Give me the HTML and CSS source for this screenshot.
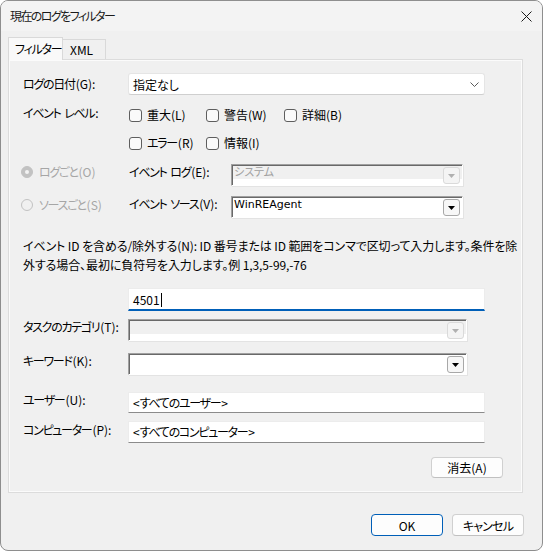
FILE: index.html
```html
<!DOCTYPE html>
<html lang="ja">
<head>
<meta charset="utf-8">
<title>現在のログをフィルター</title>
<link rel="stylesheet" href="styles.css">
</head>
<body>
<div class="window">
  <div class="titlebar">
    <span class="title">現在のログをフィルター</span>
    <svg class="close" width="11" height="11" viewBox="0 0 11 11"><path d="M0.5 0.5 L10.5 10.5 M10.5 0.5 L0.5 10.5" stroke="#1a1a1a" stroke-width="1"/></svg>
  </div>
  <div class="content">
    <div class="tabs">
      <div class="tab active">フィルター</div>
      <div class="tab">XML</div>
    </div>
    <div class="panel">
      <div class="row row-date">
        <span class="label"><span class="k">ログの日付</span>(G):</span>
        <div class="select">
          <span>指定なし</span>
          <svg class="chev" width="9" height="5" viewBox="0 0 9 5"><path d="M0.5 0.5 L4.5 4.5 L8.5 0.5" fill="none" stroke="#5a5a5a" stroke-width="1"/></svg>
        </div>
      </div>
      <div class="row row-level">
        <span class="label label-top"><span class="k">イベント</span> <span class="k">レベル</span>:</span>
        <div class="checks">
          <label class="check"><span class="box"></span>重大(L)</label>
          <label class="check"><span class="box"></span>警告(W)</label>
          <label class="check"><span class="box"></span>詳細(B)</label>
          <label class="check"><span class="box"></span><span class="k">エラー</span>(R)</label>
          <label class="check"><span class="box"></span>情報(I)</label>
        </div>
      </div>
      <div class="row row-src first-src">
        <span class="radio disabled"><span class="dot checked"></span><span class="k">ログごと</span>(O)</span>
        <span class="label2"><span class="k">イベント</span> <span class="k">ログ</span>(E):</span>
        <div class="combo disabled">
          <span class="ctext">システム</span>
          <span class="cbtn"><svg width="7" height="4" viewBox="0 0 7 4"><path d="M0 0 L7 0 L3.5 4 Z" fill="#b0b0b0"/></svg></span>
        </div>
      </div>
      <div class="row row-src second-src">
        <span class="radio disabled"><span class="dot"></span><span class="k">ソースごと</span>(S)</span>
        <span class="label2"><span class="k">イベント</span> <span class="k">ソース</span>(V):</span>
        <div class="combo">
          <span class="ctext">WinREAgent</span>
          <span class="cbtn"><svg width="7" height="4" viewBox="0 0 7 4"><path d="M0 0 L7 0 L3.5 4 Z" fill="#000"/></svg></span>
        </div>
      </div>
      <p class="desc"><span>イベント ID を含める/除外する(N): ID 番号または ID 範囲をコンマで区切って入力します。条件を除</span><span>外する場合、最初に負符号を入力します。例 1,3,5-99,-76</span></p>
      <div class="row row-id">
        <div class="input focus">4501<span class="caret"></span></div>
      </div>
      <div class="row row-task">
        <span class="label label-top"><span class="k">タスクのカテゴリ</span>(T):</span>
        <div class="combo wide disabled">
          <span class="ctext"></span>
          <span class="cbtn"><svg width="7" height="4" viewBox="0 0 7 4"><path d="M0 0 L7 0 L3.5 4 Z" fill="#b0b0b0"/></svg></span>
        </div>
      </div>
      <div class="row row-key">
        <span class="label label-top"><span class="k">キーワード</span>(K):</span>
        <div class="combo wide">
          <span class="ctext"></span>
          <span class="cbtn"><svg width="7" height="4" viewBox="0 0 7 4"><path d="M0 0 L7 0 L3.5 4 Z" fill="#000"/></svg></span>
        </div>
      </div>
      <div class="row row-user">
        <span class="label label-top"><span class="k">ユーザー</span>(U):</span>
        <div class="input">&lt;<span class="k">すべてのユーザー</span>&gt;</div>
      </div>
      <div class="row row-comp">
        <span class="label label-top"><span class="k">コンピューター</span>(P):</span>
        <div class="input">&lt;<span class="k">すべてのコンピューター</span>&gt;</div>
      </div>
      <div class="row row-clear">
        <button class="btn">消去(A)</button>
      </div>
    </div>
    <div class="footer">
      <button class="btn primary">OK</button>
      <button class="btn kana-btn">キャンセル</button>
    </div>
  </div>
</div>
</body>
</html>
```

FILE: styles.css
```css
* { box-sizing: border-box; }
html, body { margin: 0; padding: 0; }
body {
  width: 543px;
  height: 551px;
  background: #ffffff;
  font-family: "Noto Sans CJK JP", "Noto Sans", sans-serif;
  font-size: 12px;
  font-feature-settings: "palt" 1;
  color: #000;
}
.k { letter-spacing: -1.3px; margin-right: 1px; }
.window {
  width: 543px;
  height: 551px;
  border: 1px solid #8e8e8e;
  border-radius: 8px;
  background: #f0f0f0;
  overflow: hidden;
  display: flex;
  flex-direction: column;
}
.titlebar {
  height: 30px;
  flex: none;
  background: #f3f3f3;
  display: flex;
  align-items: center;
  justify-content: space-between;
  padding: 0 10px 0 9px;
}
.title { font-size: 12px; line-height: 16px; color: #1a1a1a; letter-spacing: -1.6px; }
.close { margin-top: 1px; }
.content {
  flex: 1;
  padding: 6px 18px 0 7px;
}
.tabs {
  height: 22px;
  display: flex;
  align-items: flex-end;
  position: relative;
  z-index: 1;
}
.tab {
  height: 20px;
  width: 43px;
  border: 1px solid #d9d9d9;
  border-bottom: none;
  border-left: none;
  background: #f0f0f0;
  padding-left: 7px;
  line-height: 19px;
  white-space: nowrap;
}
.tab.active {
  width: 55px;
  height: 23px;
  margin-bottom: -1px;
  border-left: 1px solid #d9d9d9;
  background: #f9f9f9;
  padding-left: 6px;
  line-height: 21px;
  letter-spacing: -1.2px;
}
.panel {
  width: 515px;
  height: 434px;
  border: 1px solid #dcdcdc;
  box-shadow: inset 0 0 0 1px #fbfbfb;
  background: #f0f0f0;
  padding: 13px 19px 0 14px;
  display: flex;
  flex-direction: column;
}
.row { display: flex; align-items: center; }
.label { width: 105px; flex: none; line-height: 16px; white-space: nowrap; }
.label-top { align-self: flex-start; }
.row-date { height: 22px; }
.select {
  width: 357px;
  height: 22px;
  background: #fff;
  border: 1px solid #e5e5e5;
  border-bottom-color: #cfcfcf;
  border-radius: 3px;
  display: flex;
  align-items: center;
  justify-content: space-between;
  padding: 0 5px 0 4px;
}
.row-level { margin-top: 8px; align-items: flex-start; }
.row-level .label { margin-top: 2px; }
.checks {
  display: grid;
  grid-template-columns: 77px 78px auto;
  row-gap: 8px;
  padding-top: 2px;
  margin-left: 1px;
}
.check {
  display: flex;
  align-items: center;
  height: 20px;
  line-height: 16px;
  white-space: nowrap;
}
.box {
  width: 13px;
  height: 13px;
  border: 1px solid #5e5e5e;
  border-radius: 3px;
  background: #fafafa;
  margin-right: 5px;
  flex: none;
}
.row-src { align-items: flex-start; height: 22px; }
.first-src { margin-top: 11px; }
.second-src { margin-top: 10px; }
.radio {
  width: 108px;
  margin-left: -2px;
  display: flex;
  align-items: center;
  line-height: 16px;
  color: #a6a6a6;
  white-space: nowrap;
}
.second-src .radio { margin-top: 1px; }
.dot {
  width: 12px;
  height: 12px;
  border-radius: 50%;
  border: 1px solid #c2c2c2;
  margin-right: 6px;
  flex: none;
  background: transparent;
}
.dot.checked {
  background: #c2c2c2;
  position: relative;
}
.dot.checked::after {
  content: "";
  position: absolute;
  left: 3px; top: 3px;
  width: 4px; height: 4px;
  border-radius: 50%;
  background: #f3f3f3;
}
.label2 { width: 102px; flex: none; line-height: 16px; white-space: nowrap; }
.combo {
  width: 232px;
  height: 22px;
  border-top: 1px solid #a0a0a0;
  border-left: 1px solid #a0a0a0;
  border-right: 1px solid #ffffff;
  border-bottom: 1px solid #ffffff;
  box-shadow: inset 1px 1px 0 #696969, 1px 1px 0 #e3e3e3;
  background: #fff;
  display: flex;
  align-items: center;
  justify-content: space-between;
  padding: 0 2px 0 2px;
  font-family: "DejaVu Sans", "Noto Sans CJK JP", sans-serif;
  font-size: 11px;
}
.combo .ctext { align-self: flex-start; line-height: 14px; padding-top: 1px; }
.combo.disabled {
  background: linear-gradient(#f0f0f0 0 14px, #ffffff 14px);
  color: #a0a0a0;
}
.cbtn {
  width: 17px;
  height: 17px;
  border: 1px solid #a8a8a8;
  border-radius: 3px;
  background: #f7f7f7;
  display: flex;
  align-items: center;
  justify-content: center;
  margin-top: 1px;
}
.combo.disabled .cbtn { border-color: #dadada; background: #f4f4f4; }
.wide { width: 339px; }
.desc {
  margin: 18px 0 0 0;
  line-height: 19px;
  white-space: nowrap;
  letter-spacing: -0.1px;
}
.desc span { display: block; }
.row-id { margin-top: 14px; padding-left: 105px; }
.input {
  width: 357px;
  height: 22px;
  background: #fff;
  border: 1px solid #ececec;
  border-bottom: 1px solid #8b8b8b;
  padding: 0 4px;
  line-height: 20px;
  display: flex;
  align-items: center;
  white-space: nowrap;
}
.input.focus {
  height: 23px;
  border-bottom: 2px solid #005fb8;
  padding-top: 1px;
}
.caret {
  display: inline-block;
  width: 1px;
  height: 14px;
  background: #000;
  margin-left: 1px;
}
.row-task { margin-top: 8px; }
.row-key { margin-top: 12px; }
.row-user { margin-top: 17px; }
.row-user .input { height: 21px; }
.row-comp { margin-top: 8px; }
.row-comp .label { margin-top: 1px; }
.row-clear { margin-top: 14px; justify-content: flex-end; }
.btn {
  width: 72px;
  height: 21px;
  background: #fdfdfd;
  border: 1px solid #d0d0d0;
  border-bottom-color: #c0c0c0;
  border-radius: 4px;
  font-family: "Noto Sans CJK JP", "Noto Sans", sans-serif;
  font-size: 12px;
  font-feature-settings: "palt" 1;
  line-height: 17px;
  color: #000;
  padding: 0;
}
.kana-btn { letter-spacing: -0.8px; }
.footer {
  display: flex;
  justify-content: flex-end;
  gap: 9px;
  margin-top: 21px;
}
.footer .btn { height: 22px; }
.btn.primary { border: 1px solid #005fb8; }
```
